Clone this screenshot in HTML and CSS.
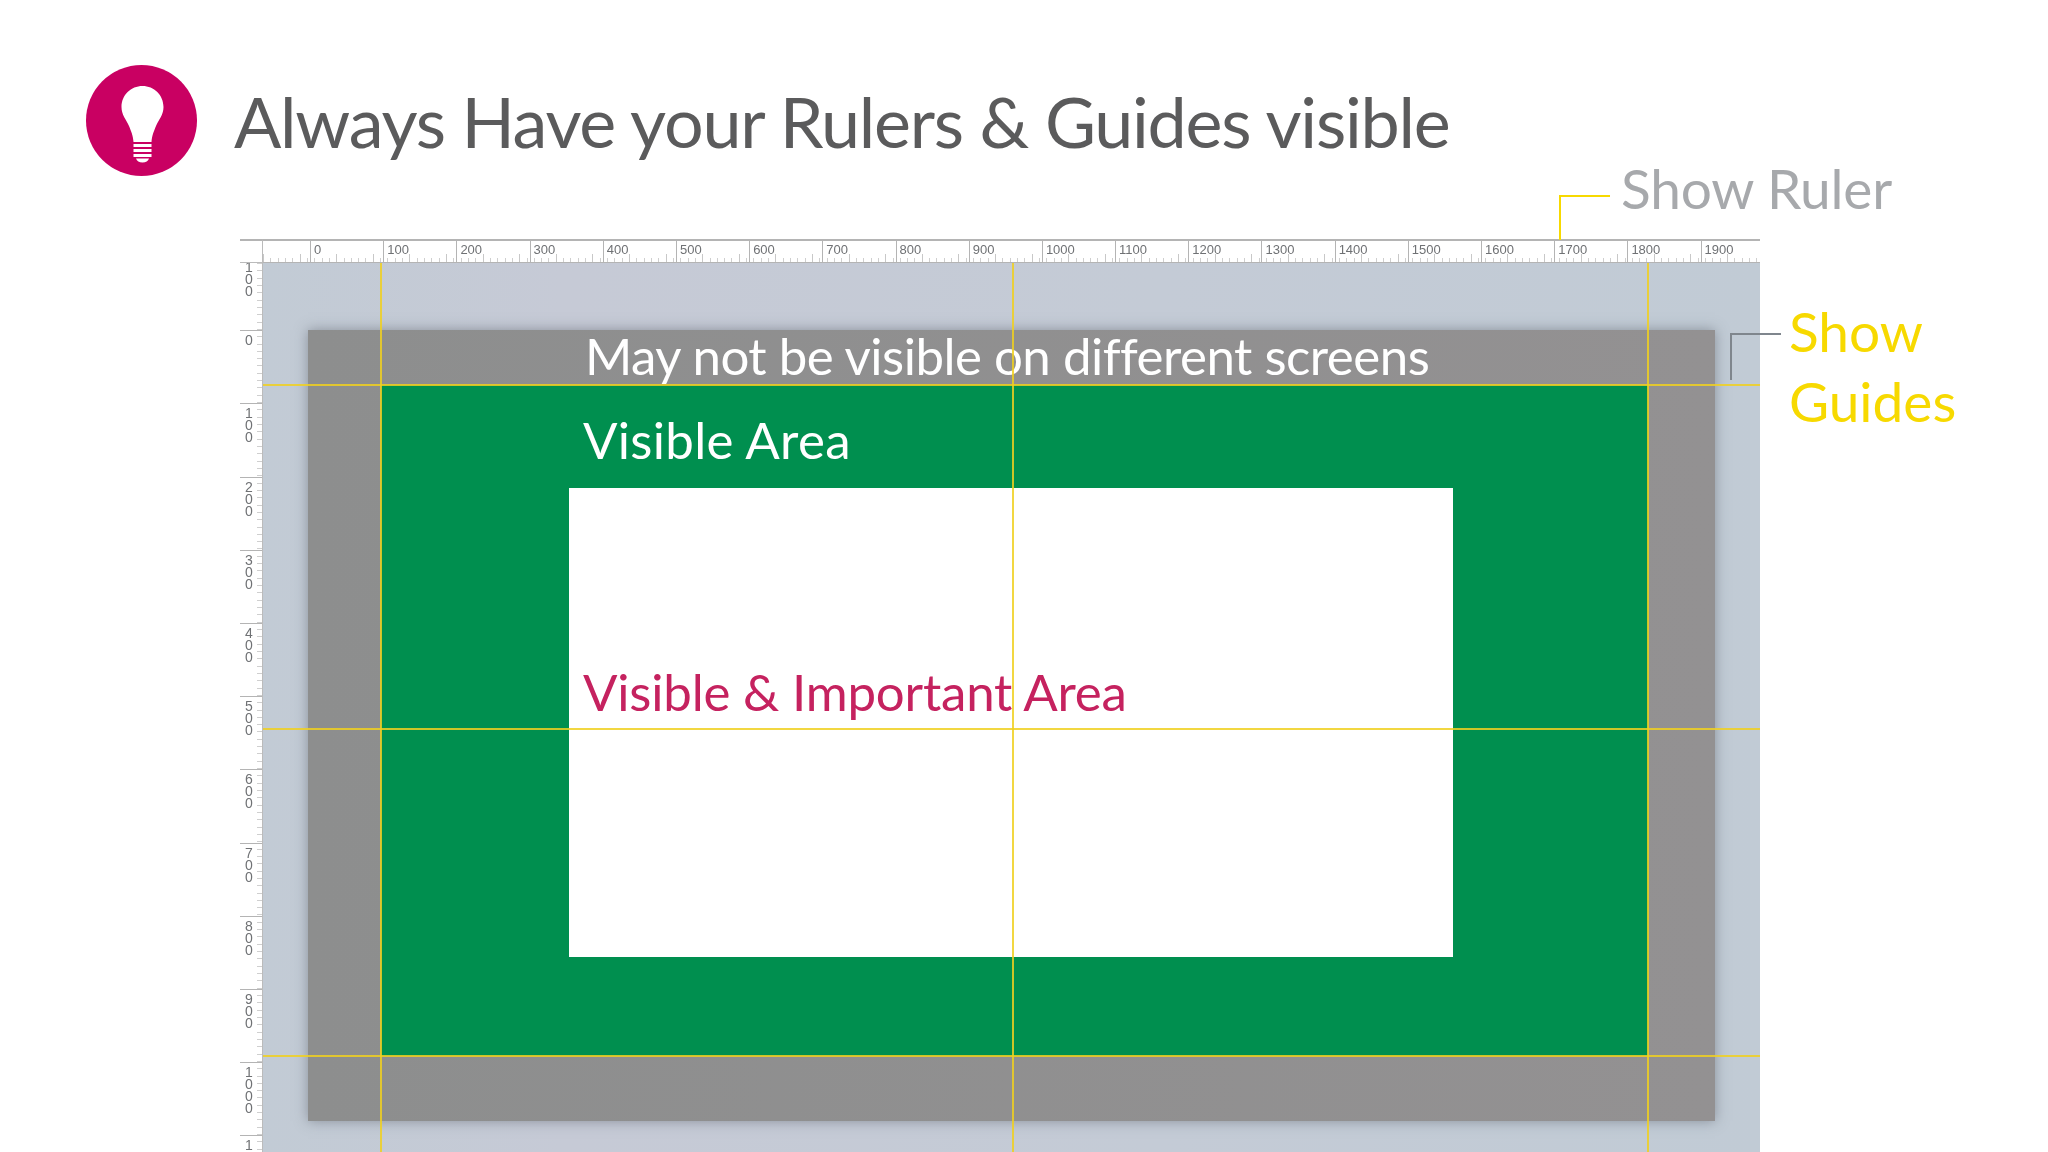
FILE: index.html
```html
<!DOCTYPE html>
<html lang="en">
<head>
  <meta charset="UTF-8">
  <title>Rulers and Guides</title>
  <link rel="stylesheet" href="styles.css">
</head>
<body>
  <div class="slide">
    <header class="header">
      <svg class="bulb" viewBox="0 0 112 112" aria-hidden="true">
        <circle cx="55.5" cy="55.5" r="55.5" fill="#c90062"/>
        <path fill="#fff" d="M56.500 21C45 21 35.500 30 35.500 42C35.500 50 40 54 43 61C45 66 47 70 47.500 77L65.500 77C66 70 68 66 70 61C73 54 77.500 50 77.500 42C77.500 30 68 21 56.500 21Z"/>
        <rect x="47.500" y="79" width="18" height="3" fill="#fff"/>
        <rect x="47.500" y="84" width="18" height="3" fill="#fff"/>
        <rect x="47.500" y="89" width="18" height="3" fill="#fff"/>
        <path fill="#fff" d="M50 93.500H63C62 96 60 97.500 56.500 97.500C53 97.500 51 96 50 93.500Z"/>
      </svg>
      <h1 class="title">Always Have your Rulers &amp; Guides visible</h1>
    </header>

    <div class="callout-ruler">
      <span class="leader leader-yellow"></span>
      <span class="callout-text">Show Ruler</span>
    </div>
    <div class="callout-guides">
      <span class="leader leader-gray"></span>
      <span class="callout-text">Show<br>Guides</span>
    </div>

    <div class="board">
      <div class="corner"></div>
      <div class="ruler-top">
        <span class="mark mark-first"></span>
        <span class="mark">0</span><span class="mark">100</span><span class="mark">200</span><span class="mark">300</span>
        <span class="mark">400</span><span class="mark">500</span><span class="mark">600</span><span class="mark">700</span>
        <span class="mark">800</span><span class="mark">900</span><span class="mark">1000</span><span class="mark">1100</span>
        <span class="mark">1200</span><span class="mark">1300</span><span class="mark">1400</span><span class="mark">1500</span>
        <span class="mark">1600</span><span class="mark">1700</span><span class="mark">1800</span><span class="mark">1900</span>
      </div>
      <div class="ruler-left">
        <span class="vmark vmark-first">100</span>
        <span class="vmark">0</span><span class="vmark">100</span><span class="vmark">200</span><span class="vmark">300</span>
        <span class="vmark">400</span><span class="vmark">500</span><span class="vmark">600</span><span class="vmark">700</span>
        <span class="vmark">800</span><span class="vmark">900</span><span class="vmark">1000</span><span class="vmark">1</span>
      </div>
      <div class="canvas">
        <div class="unsafe">
          <p class="label label-unsafe">May not be visible on different screens</p>
          <div class="visible">
            <p class="label label-visible">Visible Area</p>
            <div class="important">
              <p class="label label-important">Visible &amp; Important Area</p>
            </div>
          </div>
        </div>
        <span class="guide guide-v guide-v1"></span>
        <span class="guide guide-v guide-v2"></span>
        <span class="guide guide-v guide-v3"></span>
        <span class="guide guide-h guide-h1"></span>
        <span class="guide guide-h guide-h2"></span>
        <span class="guide guide-h guide-h3"></span>
      </div>
    </div>
  </div>
</body>
</html>
```
FILE: styles.css
```css
html, body {
  margin: 0;
  background-color: #fff;
}
.slide {
  position: relative;
  width: 2048px;
  height: 1152px;
  overflow: hidden;
  font-family: "Lato", "Liberation Sans", sans-serif;
}
.header {
  display: flex;
  align-items: center;
  gap: 36px;
  height: 111px;
  padding: 65px 0 0 86px;
}
.bulb {
  width: 112px;
  height: 112px;
  flex: none;
}
.title {
  margin: 0;
  font-size: 70px;
  font-weight: 400;
  letter-spacing: -1.22px;
  color: #5b5b5c;
  white-space: nowrap;
}

/* callouts */
.callout-ruler {
  position: absolute;
  z-index: 2;
  left: 1559px;
  top: 160px;
}
.callout-ruler .callout-text {
  position: absolute;
  left: 62px;
  top: -2px;
  font-size: 55px;
  line-height: 60px;
  letter-spacing: -0.2px;
  color: #a7a9ac;
  white-space: nowrap;
}
.callout-guides {
  position: absolute;
  z-index: 2;
  left: 1730px;
  top: 300px;
}
.callout-guides .callout-text {
  position: absolute;
  left: 59px;
  top: -4px;
  font-size: 55px;
  line-height: 70px;
  color: #f7d900;
  white-space: nowrap;
}
.leader {
  position: absolute;
  display: block;
  box-sizing: border-box;
  width: 51px;
  border-style: solid;
  border-width: 2px 0 0 2px;
}
.leader-yellow {
  top: 35px;
  left: 0;
  height: 45px;
  border-color: #f7d900;
}
.leader-gray {
  top: 33px;
  left: 0;
  height: 47px;
  border-color: #7f868d;
}

/* ruler + canvas */
.board {
  display: grid;
  grid-template-columns: 23px 1497px;
  grid-template-rows: 24px 889px;
  margin: 63px 0 0 240px;
  width: 1520px;
  color: #6f7174;
  font-family: "Liberation Sans", sans-serif;
  font-size: 13px;
}
.corner {
  border-top: 2px solid #b4b4b4;
  border-bottom: 1px solid #bbb;
  border-right: 1px solid #bbb;
  box-sizing: border-box;
}
.ruler-top {
  display: flex;
  box-sizing: border-box;
  border-top: 2px solid #b4b4b4;
  border-bottom: 1px solid #b4b4b4;
  overflow: hidden;
  background:
    repeating-linear-gradient(to right, #c8c8c8 0 1px, transparent 1px 36.6px) 0 100% / 100% 8px no-repeat,
    repeating-linear-gradient(to right, #cfcfcf 0 1px, transparent 1px 7.32px) 0 100% / 100% 4px no-repeat;
}
.mark {
  flex: none;
  box-sizing: border-box;
  width: 73.2px;
  padding: 2px 0 0 3px;
  border-left: 1px solid #b4b4b4;
  line-height: 14px;
  filter: blur(0.4px);
}
.mark-first {
  width: 47px;
  border-left: none;
}
.ruler-left {
  display: flex;
  flex-direction: column;
  box-sizing: border-box;
  overflow: hidden;
  border-right: 1px solid #bbb;
  background: repeating-linear-gradient(to bottom, #cfcfcf 0 1px, transparent 1px 7.32px) 100% 0 / 5px 100% no-repeat;
}
/* one digit per line, the way a vertical ruler stacks them */
.vmark {
  flex: none;
  box-sizing: border-box;
  height: 73.2px;
  padding: 3px 8px 0 5px;
  border-top: 1px solid #b4b4b4;
  font-size: 14px;
  line-height: 12px;
  word-break: break-all;
  filter: blur(0.4px);
}
.vmark-first {
  margin-top: -6px;
}
.canvas {
  position: relative;
  overflow: hidden;
  padding: 67px 45px 0;
  background: linear-gradient(to right, #c2cbd5, #c6cad6 20%, #c4cbd6 60%, #c1cbd5);
}
.unsafe {
  height: 791px;
  padding-top: 55px;
  box-sizing: border-box;
  background: linear-gradient(to right, #8d8e8e, #939192);
  box-shadow: 0 0 12px rgba(80, 85, 95, 0.5);
}
.visible {
  height: 671px;
  margin: 0 67px 0 73px;
  padding: 103px 195px 0 188px;
  box-sizing: border-box;
  background-color: #008f4f;
}
.important {
  height: 469px;
  background-color: #fff;
}
.label {
  margin: 0;
  position: absolute;
  font-family: "Lato", "Liberation Sans", sans-serif;
  white-space: nowrap;
}
.label-unsafe {
  left: 322px;
  top: 63px;
  font-size: 51px;
  line-height: 60px;
  letter-spacing: -0.5px;
  color: #fff;
}
.label-visible {
  left: 320px;
  top: 147px;
  font-size: 51px;
  line-height: 60px;
  letter-spacing: 0.3px;
  color: #fff;
}
.label-important {
  left: 320px;
  top: 399px;
  font-size: 51px;
  line-height: 60px;
  letter-spacing: -0.2px;
  color: #c5225f;
}

/* guides sit above the artwork */
.guide {
  position: absolute;
  background-color: rgba(240, 208, 32, 0.85);
}
.guide-v {
  top: 0;
  bottom: 0;
  width: 2px;
}
.guide-h {
  left: 0;
  right: 0;
  height: 2px;
}
.guide-v1 { left: 117px; }
.guide-v2 { left: 749px; }
.guide-v3 { left: 1384px; }
.guide-h1 { top: 121px; }
.guide-h2 { top: 465px; }
.guide-h3 { top: 792px; }
```
